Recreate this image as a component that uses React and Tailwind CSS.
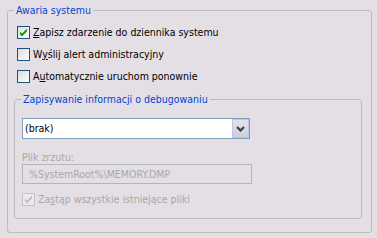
import React from 'react';

const Check = ({ color }) => (
  <svg width="9" height="9" viewBox="0 0 9 9" className="block">
    <path d="M1 4 L3 6 L8 1 M1 5 L3 7 L8 2 M1 6 L3 8 L8 3" stroke={color} strokeWidth="1" fill="none" shapeRendering="crispEdges" />
  </svg>
);

const Box = ({ checked, disabled }) => (
  <span
    className={`w-[13px] h-[13px] shrink-0 flex items-center justify-center border ${
      disabled
        ? 'border-[#c4c2c8] bg-[#ece9ec]'
        : 'border-[#1c5180] bg-gradient-to-br from-[#dcdcd7] to-white'
    }`}
  >
    {checked && <Check color={disabled ? '#c4c2c8' : '#21a121'} />}
  </span>
);

const Row = ({ children, checked, disabled, className = '' }) => (
  <div className={`flex items-center h-[22px] ${className}`}>
    <Box checked={checked} disabled={disabled} />
    <span className={`ml-[3px] ${disabled ? 'text-[#a9a6ab]' : 'text-black'}`}>{children}</span>
  </div>
);

export default function App() {
  return (
    <div
      className="w-[377px] h-[238px] bg-[#e4dfe4] px-[7px] pt-[4px] text-[10.5px] leading-[13px] overflow-hidden"
      style={{ fontFamily: '"DejaVu Sans Condensed", "DejaVu Sans", sans-serif', fontStretch: 'condensed' }}
    >
      <fieldset className="w-[365px] border border-[#bcbcbc] rounded-[3px]">
        <legend className="ml-[6px] px-[2px] text-[#0046d5]">Awaria systemu</legend>
        <div className="pt-[4px] pl-[9px]">
          <Row checked>
            <u>Z</u>apisz zdarzenie do dziennika systemu
          </Row>
          <Row>
            W<u>y</u>ślij alert administracyjny
          </Row>
          <Row>
            A<u>u</u>tomatycznie uruchom ponownie
          </Row>
        </div>
        <div className="pl-[6px] pt-[6px] pb-[13px]">
          <fieldset className="w-[348px] border border-[#bcbcbc] rounded-[3px]">
            <legend className="ml-[6px] px-[2px] text-[#0046d5]">Zapisywanie informacji o debugowaniu</legend>
            <div className="pl-[7px] pt-[12px] pb-[8px]">
              <div className="w-[228px] h-[21px] border border-[#7f9db9] bg-white flex items-center">
                <span className="pl-[2px] flex-1 text-black">(brak)</span>
                <span className="w-[17px] h-[19px] border border-[#b8c8ee] bg-gradient-to-b from-[#e2e2ea] to-[#cfcfd8] flex items-center justify-center">
                  <svg width="9" height="6" viewBox="0 0 9 6">
                    <path d="M1 1 L4.5 4.5 L8 1" stroke="#3d3d45" strokeWidth="2.2" fill="none" />
                  </svg>
                </span>
              </div>
              <div className="mt-[12px] text-[#a9a6ab]">Plik zrzutu:</div>
              <div className="w-[230px] h-[20px] border border-[#b5b5b8] flex items-center pl-[6px] text-[#a9a6ab]">
                %SystemRoot%\MEMORY.DMP
              </div>
              <Row checked disabled className="mt-[4px]">
                Za<u>s</u>tąp wszystkie istniejące pliki
              </Row>
            </div>
          </fieldset>
        </div>
      </fieldset>
    </div>
  );
}
